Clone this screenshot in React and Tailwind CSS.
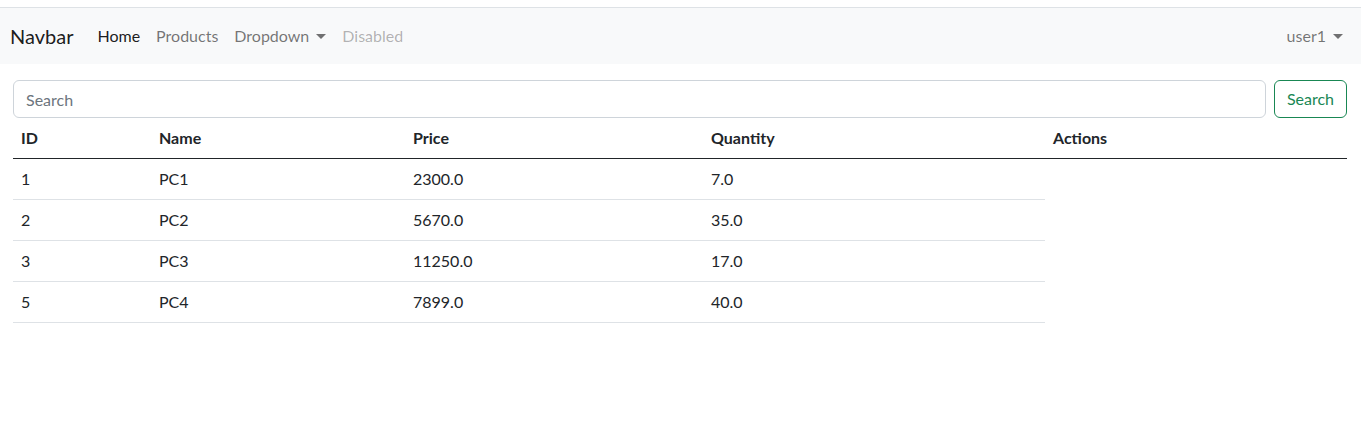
import React from "react";

const rows = [
  ["1", "PC1", "2300.0", "7.0"],
  ["2", "PC2", "5670.0", "35.0"],
  ["3", "PC3", "11250.0", "17.0"],
  ["5", "PC4", "7899.0", "40.0"],
];

function Caret() {
  return (
    <span className="inline-block ml-[7px] align-[3px] border-t-[5px] border-t-current border-x-[5px] border-x-transparent w-0 h-0" />
  );
}

export default function App() {
  const font = { fontFamily: "Lato, 'Noto Sans', sans-serif" };
  return (
    <div className="min-h-[442px] bg-white text-[#212529] text-[16px] leading-6" style={font}>
      <div className="h-[7px]" />
      <nav className="border-t border-[#dee2e6] bg-[#f8f9fa] h-[57px] flex items-center px-[10px]">
        <span className="text-[20px] leading-[30px] text-black/90 mr-[16px]">Navbar</span>
        <div className="flex items-center">
          <span className="px-2 py-2 text-black/90">Home</span>
          <span className="px-2 py-2 text-black/55">Products</span>
          <span className="px-2 py-2 text-black/55 flex items-center">
            Dropdown
            <Caret />
          </span>
          <span className="px-2 py-2 text-black/30">Disabled</span>
        </div>
        <div className="ml-auto">
          <span className="px-2 py-2 text-black/55 flex items-center">
            user1
            <Caret />
          </span>
        </div>
      </nav>
      <div className="pl-[13px] pr-[14px] pt-[16px]">
        <div className="flex gap-2">
          <input
            className="flex-1 h-[38px] border border-[#ced4da] rounded-[6px] px-3 text-[16px] outline-none placeholder:text-[#6c757d]"
            placeholder="Search"
            style={font}
          />
          <button className="h-[38px] px-3 border border-[#198754] text-[#198754] rounded-[6px] bg-white">
            Search
          </button>
        </div>
        <table className="w-full table-fixed border-collapse">
          <colgroup>
            <col className="w-[138px]" />
            <col className="w-[254px]" />
            <col className="w-[298px]" />
            <col className="w-[342px]" />
            <col />
          </colgroup>
          <thead>
            <tr className="border-b border-[#212529]">
              {["ID", "Name", "Price", "Quantity", "Actions"].map((h) => (
                <th key={h} className="text-left font-bold px-2 py-2 h-[40px]">
                  {h}
                </th>
              ))}
            </tr>
          </thead>
          <tbody>
            {rows.map((r) => (
              <tr key={r[0]}>
                {r.map((c, i) => (
                  <td key={i} className="px-2 py-2 h-[41px] border-b border-[#dee2e6]">
                    {c}
                  </td>
                ))}
              </tr>
            ))}
          </tbody>
        </table>
      </div>
    </div>
  );
}
